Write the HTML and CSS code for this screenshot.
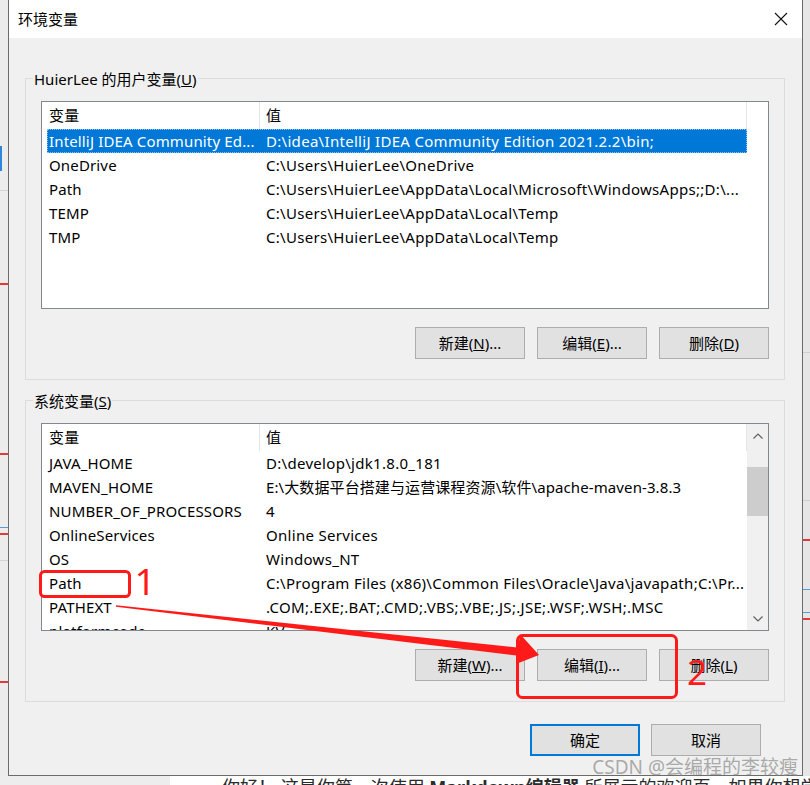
FILE: index.html
```html
<!DOCTYPE html>
<html lang="zh-CN">
<head>
<meta charset="utf-8">
<title>环境变量</title>
<link rel="stylesheet" href="styles.css">
</head>
<body>
<div class="screen">
  <div class="main">
    <div class="strip strip-left"></div>
    <div class="dialog">
      <div class="titlebar">
        <span class="title">环境变量</span>
        <svg class="close" width="14" height="14" viewBox="0 0 14 14"><path d="M1 1 L13 13 M13 1 L1 13" stroke="#111" stroke-width="1.1" fill="none"/></svg>
      </div>
      <div class="body">
        <div class="group">
          <div class="group-label">HuierLee 的用户变量(<u>U</u>)</div>
          <div class="list">
            <div class="rows">
              <div class="row head"><div class="cell c1">变量</div><div class="cell c2">值</div></div>
              <div class="row sel"><div class="cell c1">IntelliJ IDEA Community Ed...</div><div class="cell c2">D:\idea\IntelliJ IDEA Community Edition 2021.2.2\bin;</div></div>
              <div class="row"><div class="cell c1">OneDrive</div><div class="cell c2">C:\Users\HuierLee\OneDrive</div></div>
              <div class="row"><div class="cell c1">Path</div><div class="cell c2">C:\Users\HuierLee\AppData\Local\Microsoft\WindowsApps;;D:\...</div></div>
              <div class="row"><div class="cell c1">TEMP</div><div class="cell c2">C:\Users\HuierLee\AppData\Local\Temp</div></div>
              <div class="row"><div class="cell c1">TMP</div><div class="cell c2">C:\Users\HuierLee\AppData\Local\Temp</div></div>
            </div>
          </div>
          <div class="btns">
            <div class="btn">新建(<u>N</u>)...</div>
            <div class="btn">编辑(<u>E</u>)...</div>
            <div class="btn">删除(<u>D</u>)</div>
          </div>
        </div>
        <div class="group group-sys">
          <div class="group-label">系统变量(<u>S</u>)</div>
          <div class="list">
            <div class="rows">
              <div class="row head"><div class="cell c1">变量</div><div class="cell c2">值</div></div>
              <div class="row"><div class="cell c1">JAVA_HOME</div><div class="cell c2">D:\develop\jdk1.8.0_181</div></div>
              <div class="row"><div class="cell c1">MAVEN_HOME</div><div class="cell c2 mixed">E:\大数据平台搭建与运营课程资源\软件\apache-maven-3.8.3</div></div>
              <div class="row"><div class="cell c1">NUMBER_OF_PROCESSORS</div><div class="cell c2">4</div></div>
              <div class="row"><div class="cell c1">OnlineServices</div><div class="cell c2">Online Services</div></div>
              <div class="row"><div class="cell c1">OS</div><div class="cell c2">Windows_NT</div></div>
              <div class="row"><div class="cell c1">Path</div><div class="cell c2">C:\Program Files (x86)\Common Files\Oracle\Java\javapath;C:\Pr...</div></div>
              <div class="row"><div class="cell c1">PATHEXT</div><div class="cell c2">.COM;.EXE;.BAT;.CMD;.VBS;.VBE;.JS;.JSE;.WSF;.WSH;.MSC</div></div>
              <div class="row"><div class="cell c1">platformcode</div><div class="cell c2">KV</div></div>
            </div>
            <div class="scrollbar">
              <div class="sb-btn"><svg width="10" height="6" viewBox="0 0 10 6"><path d="M0.5 5.5 L5 1 L9.5 5.5" stroke="#606060" stroke-width="1.2" fill="none"/></svg></div>
              <div class="sb-track"><div class="sb-thumb"></div></div>
              <div class="sb-btn"><svg width="10" height="6" viewBox="0 0 10 6"><path d="M0.5 0.5 L5 5 L9.5 0.5" stroke="#606060" stroke-width="1.2" fill="none"/></svg></div>
            </div>
          </div>
          <div class="btns">
            <div class="btn">新建(<u>W</u>)...</div>
            <div class="btn">编辑(<u>I</u>)...</div>
            <div class="btn">删除(<u>L</u>)</div>
          </div>
        </div>
        <div class="dialog-btns">
          <div class="btn btn-default">确定</div>
          <div class="btn">取消</div>
        </div>
      </div>
    </div>
    <div class="strip strip-right"></div>
  </div>
  <div class="under">
    <div class="under-left"></div>
    <div class="under-text">你好！ 这是你第一次使用 <b>Markdown编辑器</b> 所展示的欢迎页。如果你想学习如何使用Markdown编辑器, 可以仔细阅读这篇文章</div>
  </div>
  <div class="watermark">CSDN @会编程的李较瘦</div>
  <svg class="annot" width="810" height="785" viewBox="0 0 810 785">
    <rect x="40.5" y="571.5" width="89" height="25" rx="4" fill="none" stroke="#ff1a1a" stroke-width="3"/>
    <rect x="517.5" y="635.5" width="159" height="62" rx="5" fill="none" stroke="#ff1a1a" stroke-width="3"/>
    <polygon points="116,605.2 116,606.8 520.5,656 521.5,648" fill="#ff1a1a"/>
    <polygon points="520,634 539,655 516,664" fill="#ff1a1a"/>
    <text x="145" y="595" class="num n1">1</text>
    <text x="697" y="685" class="num n2">2</text>
  </svg>
</div>
</body>
</html>
```
FILE: styles.css
```css
* { box-sizing: border-box; }
html, body { margin: 0; padding: 0; }
body {
  width: 810px;
  height: 785px;
  overflow: hidden;
  background: #f0f0f0;
  font-family: "Noto Sans", "Noto Sans CJK SC", sans-serif;
  font-size: 15px;
  color: #000;
}
.screen { position: relative; width: 810px; height: 785px; overflow: hidden; }
.main { display: flex; height: 776px; }

.strip { flex: none; }
.strip-left {
  width: 8px;
  background:
    linear-gradient(#2f86dc, #2f86dc) 0 146px / 2px 25px no-repeat,
    linear-gradient(#e23a3a, #e23a3a) 0 283px / 8px 2px no-repeat,
    linear-gradient(#e23a3a, #e23a3a) 0 453px / 8px 2px no-repeat,
    linear-gradient(#5b9bd5, #5b9bd5) 0 527px / 8px 1px no-repeat,
    linear-gradient(#e23a3a, #e23a3a) 0 533px / 8px 2px no-repeat,
    linear-gradient(#e23a3a, #e23a3a) 0 681px / 8px 2px no-repeat,
    linear-gradient(#d4d4d4, #d4d4d4) 0 190px / 8px 1px no-repeat,
    linear-gradient(#d4d4d4, #d4d4d4) 0 560px / 8px 1px no-repeat,
    #ececec;
}
.strip-right {
  width: 7px;
  background:
    linear-gradient(#e23a3a, #e23a3a) 0 539px / 7px 2px no-repeat,
    linear-gradient(#5b9bd5, #5b9bd5) 0 589px / 7px 1px no-repeat,
    linear-gradient(#5b9bd5, #5b9bd5) 0 612px / 7px 1px no-repeat,
    linear-gradient(#e23a3a, #e23a3a) 0 618px / 7px 2px no-repeat,
    linear-gradient(#cfcfcf, #cfcfcf) 0 352px / 7px 1px no-repeat,
    linear-gradient(#cfcfcf, #cfcfcf) 0 500px / 7px 1px no-repeat,
    #e6e6e6;
}

.dialog {
  width: 795px;
  flex: none;
  background: #f0f0f0;
  border: 1px solid #6b6b6b;
  border-top: none;
  display: flex;
  flex-direction: column;
}
.titlebar {
  height: 38px;
  background: #fff;
  display: flex;
  align-items: center;
  justify-content: space-between;
  padding: 0 14px 0 9px;
}
.title { font-family: "Noto Sans CJK SC", sans-serif; font-size: 15px; line-height: 20px; }
.close { display: block; }

.body { padding: 40px 17px 0 16px; }
.group {
  border: 1px solid #dcdcdc;
  padding: 0 15px 20px;
}
.group + .group { margin-top: 20px; }
.group-label {
  margin: -10px 0 0 -8px;
  padding: 0 1px;
  width: max-content;
  height: 20px;
  line-height: 20px;
  background: #f0f0f0;
}

.list {
  margin-top: 12px;
  height: 208px;
  border: 1px solid #828790;
  background: #fff;
  overflow: hidden;
  display: flex;
}
.rows { flex: 1; min-width: 0; overflow: hidden; }
.row {
  display: grid;
  grid-template-columns: 212px 488px;
  margin-left: 5px;
  width: 700px;
  height: 24px;
  line-height: 24px;
  white-space: nowrap;
  letter-spacing: 0.3px;
}
.row.head { height: 27px; line-height: 26px; letter-spacing: 0; }
.cell { overflow: hidden; padding-left: 2px; }
.cell.c1 { letter-spacing: 0.15px; }
.cell.c2 { padding-left: 7px; }
.cell.mixed { letter-spacing: 0.1px; }
.head .c2 {
  border-left: 1px solid #e5e5e5;
  border-right: 1px solid #e5e5e5;
  padding-left: 6px;
}
.row.sel {
  background: #0078d7;
  color: #fff;
  outline: 1px dotted #8cc0ec;
  outline-offset: -1px;
}

.scrollbar {
  width: 21px;
  flex: none;
  background: #f0f0f0;
  display: flex;
  flex-direction: column;
}
.sb-btn {
  height: 23px;
  display: flex;
  align-items: center;
  justify-content: center;
}
.sb-btn svg { display: block; }
.sb-track { flex: 1; padding-top: 20px; }
.sb-thumb { height: 49px; background: #cdcdcd; }

.btns {
  display: flex;
  justify-content: flex-end;
  gap: 12px;
  margin-top: 18px;
}
.btn {
  width: 110px;
  height: 32px;
  background: #e1e1e1;
  border: 1px solid #adadad;
  display: flex;
  align-items: center;
  justify-content: center;
  line-height: 20px;
  white-space: nowrap;
}
.btn-default { border: 2px solid #0078d7; }
.dialog-btns {
  display: flex;
  justify-content: flex-end;
  gap: 11px;
  margin-top: 22px;
  padding-right: 24px;
}

.under { display: flex; height: 9px; overflow: hidden; }
.under-left { width: 170px; flex: none; background: #ededed; }
.under-text {
  flex: 1;
  background: #fff;
  padding-left: 52px;
  font-size: 18px;
  line-height: 22px;
  white-space: nowrap;
  color: #2b2b2b;
  overflow: hidden;
}

.watermark {
  position: absolute;
  right: 12px;
  top: 754px;
  font-size: 19px;
  line-height: 26px;
  color: rgba(150, 150, 150, 0.8);
  white-space: nowrap;
}

.annot { position: absolute; left: 0; top: 0; pointer-events: none; }
.num {
  font-family: "Noto Sans", sans-serif;
  fill: #ff1a1a;
  text-anchor: middle;
}
.n1 { font-size: 37px; }
.n2 { font-size: 35px; }
```
